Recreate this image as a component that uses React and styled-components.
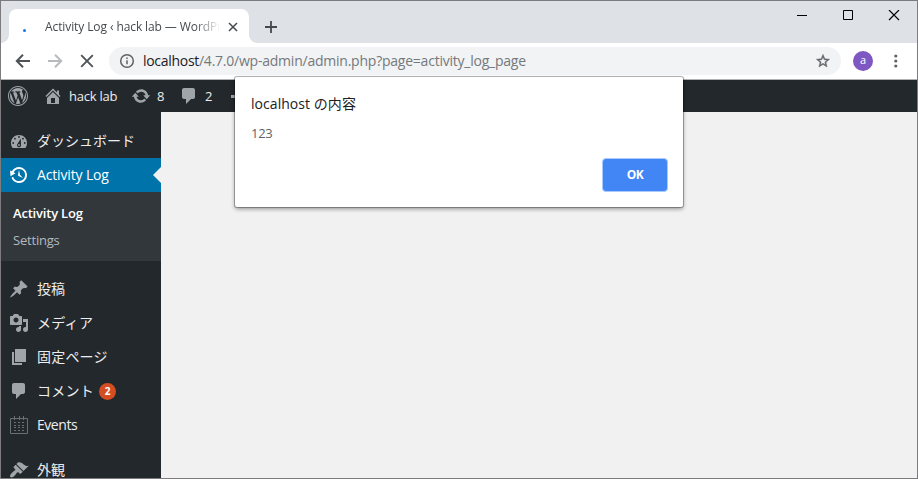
import React from "react";
import styled, { createGlobalStyle } from "styled-components";

const GlobalStyle = createGlobalStyle`
  * { box-sizing: border-box; }
  body { margin: 0; overflow: hidden; font-family: "Open Sans", "Noto Sans CJK JP", sans-serif; }
`;

const Window = styled.div`
  position: relative;
  width: 918px;
  height: 479px;
  overflow: hidden;
  display: flex;
  flex-direction: column;
  border: 1px solid #7c7c7e;
  background: #f1f1f1;
`;

const Label = styled.span`
  white-space: nowrap;
  line-height: 20px;
  font-size: ${(p) => p.$size || 13}px;
  font-weight: ${(p) => p.$weight || 400};
  color: ${(p) => p.$color || "inherit"};
  letter-spacing: ${(p) => p.$track || 0}px;
`;

const TabStrip = styled.header`
  display: flex;
  flex: none;
  height: 42px;
  padding: 8px 0 0 8px;
  background: #dee1e6;
`;

const Tab = styled.div`
  position: relative;
  display: flex;
  align-items: center;
  width: 240px;
  height: 34px;
  padding: 2px 11px 0 14px;
  border-radius: 8px 8px 0 0;
  background: #fff;
  color: #45494d;
  &::before, &::after {
    content: "";
    position: absolute;
    bottom: 0;
    width: 8px;
    height: 8px;
  }
  &::before { left: -8px; background: radial-gradient(circle at 0 0, transparent 7.5px, #fff 8px); }
  &::after { right: -8px; background: radial-gradient(circle at 100% 0, transparent 7.5px, #fff 8px); }
`;

const LoadingDot = styled.i`
  width: 3px;
  height: 3px;
  margin: 6px 19px 0 0;
  border-radius: 50%;
  background: #1a73e8;
`;

const TabTitle = styled.div`
  width: 175px;
  margin-right: 8px;
  display: flex;
  -webkit-mask-image: linear-gradient(to right, #000 150px, transparent 175px);
  mask-image: linear-gradient(to right, #000 150px, transparent 175px);
`;

const NewTab = styled.div`
  padding: 11px 0 0 15px;
  flex: 1;
`;

const WindowControls = styled.div`
  display: flex;
  gap: 34px;
  padding: 1px 17px 0 0;
`;

const Glyph = styled.svg`
  display: block;
  flex: none;
  width: ${(p) => p.$size}px;
  height: ${(p) => p.$size}px;
  fill: ${(p) => p.$fill || "none"};
  stroke: ${(p) => p.$stroke || "none"};
`;

const Toolbar = styled.nav`
  display: flex;
  flex: none;
  align-items: center;
  height: 37px;
  padding: 0 14px 1px 14px;
  border-bottom: 1px solid #b1b2b3;
  background: #fff;
`;

const NavButtons = styled.div`
  display: flex;
  flex: none;
  gap: 16px;
  width: 94px;
`;

const AddressBar = styled.div`
  display: flex;
  flex: none;
  align-items: center;
  width: 732px;
  height: 28px;
  padding: 0 10px;
  border-radius: 14px;
  background: #f1f3f4;
`;

const Url = styled.div`
  flex: 1;
  display: flex;
  margin-left: 8px;
`;

const Avatar = styled.div`
  display: flex;
  flex: none;
  align-items: center;
  justify-content: center;
  width: 20px;
  height: 20px;
  margin: 0 16px 0 12px;
  padding-bottom: 1px;
  border-radius: 50%;
  background: #7e57c2;
`;

const AdminBar = styled.div`
  display: flex;
  align-items: center;
  flex: none;
  height: 32px;
  padding-left: 7px;
  background: #23282d;
  color: #eee;
`;

const AdminItem = styled.div`
  display: flex;
  align-items: center;
  width: ${(p) => p.$width}px;
  gap: ${(p) => p.$gap || 6}px;
`;

const Body = styled.div`
  display: flex;
  flex: 1;
  min-height: 0;
`;

const Sidebar = styled.aside`
  width: 160px;
  padding-top: 12px;
  overflow: hidden;
  background: #23282d;
  color: #eee;
`;

const MenuItem = styled.div`
  position: relative;
  display: flex;
  align-items: center;
  gap: 8px;
  height: 34px;
  padding-left: 8px;
  margin-top: ${(p) => (p.$separated ? 11 : 0)}px;
  background: ${(p) => (p.$active ? "#0073aa" : "transparent")};
  color: ${(p) => (p.$active ? "#fff" : "#eee")};
`;

const Pointer = styled.i`
  position: absolute;
  right: 0;
  top: 9px;
  border: 8px solid transparent;
  border-left: 0;
  border-right-color: #f1f1f1;
`;

const SubMenu = styled.div`
  display: flex;
  flex-direction: column;
  gap: 7px;
  height: 69px;
  padding: 11px 12px;
  background: #32373c;
`;

const Count = styled.span`
  display: flex;
  align-items: center;
  justify-content: center;
  width: 17px;
  height: 17px;
  margin-left: -3px;
  border-radius: 50%;
  background: #d54e21;
  color: #fff;
`;

const Dialog = styled.div`
  position: absolute;
  left: 234px;
  top: 76px;
  display: flex;
  flex-direction: column;
  width: 448px;
  height: 130px;
  padding: 17px 15px 15px 16px;
  border-radius: 2px;
  background: #fff;
  box-shadow: 0 0 0 1px rgba(0, 0, 0, 0.27), 0 2px 4px rgba(0, 0, 0, 0.4);
`;

const DialogText = styled.div`
  display: flex;
  flex-direction: column;
  flex: 1;
  gap: 9px;
`;

const OkButton = styled.button`
  align-self: flex-end;
  display: flex;
  align-items: center;
  justify-content: center;
  width: 66px;
  height: 34px;
  padding: 0;
  border: 1px solid #a9c8fb;
  border-radius: 4px;
  background: #4285f4;
  font-family: inherit;
`;

const WORDPRESS = "M20 10c0-5.52-4.48-10-10-10S0 4.48 0 10s4.48 10 10 10 10-4.48 10-10zM10 1.01c4.97 0 8.99 4.02 8.99 8.99s-4.02 8.99-8.99 8.99S1.01 14.97 1.01 10 5.03 1.01 10 1.01zM8.01 14.82L4.96 6.61c.49-.03 1.05-.08 1.05-.08.43-.05.38-1.01-.06-.99 0 0-1.29.1-2.13.1-.15 0-.33 0-.52-.01 1.44-2.17 3.9-3.6 6.7-3.6 2.09 0 3.99.79 5.41 2.09-.6-.08-1.45.35-1.45 1.42 0 .66.38 1.22.79 1.88.31.54.5 1.22.5 2.21 0 1.34-1.27 4.48-1.27 4.48l-2.71-7.5c.48-.03.75-.16.75-.16.43-.05.38-1.1-.05-1.08 0 0-1.3.11-2.14.11-.78 0-2.11-.11-2.11-.11-.43-.02-.48 1.06-.05 1.08l.84.08 1.12 3.04zm6.02 2.15L16.64 10s.67-1.69.39-3.81c.63 1.14.94 2.42.94 3.81 0 2.96-1.56 5.58-3.94 6.97zM2.68 6.77L6.5 17.25c-2.67-1.3-4.47-4.08-4.47-7.25 0-1.16.2-2.23.65-3.23zm7.45 4.53l2.29 6.25c-.75.27-1.57.42-2.42.42-.72 0-1.41-.11-2.06-.3z";
const HOME = "M16 8.5l1.53 1.53-1.06 1.06L10 4.6l-6.47 6.49-1.06-1.06L10 2.5l4 4v-2h2v4zm-6-2.46l6 5.99V18H4v-5.97zM12 17v-5H8v5h4z";
const UPDATE = "M10.2 3.28c3.53 0 6.43 2.61 6.92 6h2.08l-3.5 4-3.5-4h2.32c-.45-1.97-2.21-3.45-4.32-3.45-1.45 0-2.73.71-3.54 1.78L4.95 5.66C6.23 4.2 8.11 3.28 10.2 3.28zm-.4 13.44c-3.52 0-6.43-2.61-6.92-6H.8l3.5-4c1.17 1.33 2.33 2.67 3.5 4H5.48c.45 1.97 2.21 3.45 4.32 3.45 1.45 0 2.73-.71 3.54-1.78l1.71 1.95c-1.28 1.46-3.15 2.38-5.25 2.38z";
const COMMENT = "M5 2h9c1.1 0 2 .9 2 2v7c0 1.1-.9 2-2 2h-2l-5 5v-5H5c-1.1 0-2-.9-2-2V4c0-1.1.9-2 2-2z";
const BACKUP = "M13.65 2.88c3.93 2.01 5.48 6.84 3.47 10.77s-6.83 5.48-10.77 3.47c-1.87-.96-3.2-2.56-3.86-4.4l1.64-1.03c.45 1.57 1.52 2.95 3.08 3.76 3.01 1.54 6.69.35 8.23-2.66 1.55-3.01.36-6.69-2.65-8.24C9.78 3.01 6.1 4.2 4.56 7.21l1.88.97-4.95 3.08-.39-5.82 1.78.91C4.9 2.4 9.75.89 13.65 2.88zm-4.36 7.83C9.11 10.53 9 10.28 9 10c0-.07.03-.12.04-.19h-.01L10 5l.97 4.81L14 13l-4.5-2.12.02-.02c-.08-.04-.16-.09-.23-.15z";
const PIN = "M10.44 3.02l1.82-1.82 6.36 6.35-1.83 1.82c-1.05-.68-2.48-.57-3.41.36l-.75.75c-.92.93-1.04 2.35-.35 3.41l-1.83 1.82-2.41-2.41-2.8 2.79c-.42.42-3.38 2.71-3.8 2.29s1.86-3.39 2.28-3.81l2.79-2.79L4.1 9.36l1.83-1.82c1.05.69 2.48.57 3.4-.36l.75-.75c.93-.92 1.05-2.35.36-3.41z";
const MEDIA = "M13 11V4c0-.55-.45-1-1-1h-1.67L9 1H5L3.67 3H2c-.55 0-1 .45-1 1v7c0 .55.45 1 1 1h10c.55 0 1-.45 1-1zM7 4.5c1.38 0 2.5 1.12 2.5 2.5S8.38 9.5 7 9.5 4.5 8.38 4.5 7 5.62 4.5 7 4.5zM14 6h5v10.5c0 1.38-1.12 2.5-2.5 2.5S14 17.88 14 16.5s1.12-2.5 2.5-2.5c.17 0 .34.02.5.05V9h-3V6zm-4 8.05V13h2v3.5c0 1.38-1.12 2.5-2.5 2.5S7 17.88 7 16.5 8.12 14 9.5 14c.17 0 .34.02.5.05z";
const PAGE = "M6 15V2h11v13H6zm-1 1h8v2H3V5h2v11z";
const BRUSH = "M14.48 11.06L7.41 3.99l1.5-1.5c.5-.56 2.3-.47 3.51.32 1.21.8 1.43 1.28 2.91 2.1 1.18.64 2.45 1.26 4.45.85zm-.71.71L6.7 4.7 4.93 6.47c-.39.39-.39 1.02 0 1.41l1.06 1.06c.39.39.39 1.03 0 1.42-.6.6-1.43 1.11-2.21 1.69-.35.26-.7.53-1.01.84C1.43 14.23.4 16.08 1.4 17.07c.99 1 2.84-.03 4.18-1.36.31-.31.58-.66.85-1.02.57-.78 1.08-1.61 1.69-2.21.39-.39 1.02-.39 1.41 0l1.06 1.06c.39.39 1.02.39 1.41 0z";

function AdminIcon({ path, color = "#a0a5aa" }) {
  return (
    <Glyph viewBox="0 0 20 20" $size={20} $fill={color}>
      <path d={path} />
    </Glyph>
  );
}

function DashboardIcon() {
  return (
    <Glyph viewBox="0 0 20 20" $size={20} $fill="#a0a5aa">
      <path d="M3.76 17h12.48c1.1-1.41 1.76-3.18 1.76-5.1C18 7.53 14.42 4 10 4s-8 3.53-8 7.9c0 1.92.66 3.69 1.76 5.1z" />
      <g fill="#23282d">
        <circle cx="10" cy="6" r="0.9" />
        <circle cx="6" cy="7.7" r="0.9" />
        <circle cx="14" cy="7.7" r="0.9" />
        <circle cx="4.2" cy="12" r="0.9" />
        <circle cx="15.8" cy="12" r="0.9" />
        <path d="M11.8 7.5 L12 14.2 A2 2 0 1 1 8.6 12.8z" />
      </g>
      <circle cx="10" cy="14" r="0.9" />
    </Glyph>
  );
}

function CalendarIcon() {
  return (
    <Glyph viewBox="0 0 20 20" $size={20} $stroke="#6a6f74">
      <path d="M1.5 3.5h17v15h-17zM5.5 1v4M10.5 1v4M14.5 1v4" />
      <path d="M5 7.5h10M5 10.5h10M5 12.5h10M5 15.5h10" strokeDasharray="2 2" />
    </Glyph>
  );
}

const menu = [
  { label: "投稿", icon: <AdminIcon path={PIN} />, separated: true },
  { label: "メディア", icon: <AdminIcon path={MEDIA} />, track: 0.3 },
  { label: "固定ページ", icon: <AdminIcon path={PAGE} />, track: 0.2 },
  { label: "コメント", icon: <AdminIcon path={COMMENT} />, track: 0.25, count: 2 },
  { label: "Events", icon: <CalendarIcon />, track: -0.45 },
  { label: "外観", icon: <AdminIcon path={BRUSH} />, separated: true },
];

export default function App() {
  return (
    <>
      <GlobalStyle />
      <Window>
        <TabStrip>
          <Tab>
            <LoadingDot />
            <TabTitle><Label $size={12} $track={-0.1}>Activity Log ‹ hack lab — WordPr</Label></TabTitle>
            <Glyph viewBox="0 0 10 10" $size={10} $stroke="#45494d" strokeWidth="1.5"><path d="M1 1l8 8M9 1l-8 8" /></Glyph>
          </Tab>
          <NewTab>
            <Glyph viewBox="0 0 14 14" $size={14} $stroke="#45494d" strokeWidth="1.8"><path d="M7 1v12M1 7h12" /></Glyph>
          </NewTab>
          <WindowControls>
            <Glyph viewBox="0 0 12 12" $size={12} $stroke="#000"><path d="M1 5.5h10" /></Glyph>
            <Glyph viewBox="0 0 12 12" $size={12} $stroke="#000"><path d="M1.5 .5h9v9h-9z" /></Glyph>
            <Glyph viewBox="0 0 12 12" $size={12} $stroke="#000" strokeWidth="1.2"><path d="M1 0l10 10M11 0L1 10" /></Glyph>
          </WindowControls>
        </TabStrip>

        <Toolbar>
          <NavButtons>
            <Glyph viewBox="0 0 16 16" $size={16} $stroke="#4f5357" strokeWidth="2"><path d="M15 8H2.2M8 1.8L1.8 8l6.2 6.2" /></Glyph>
            <Glyph viewBox="0 0 16 16" $size={16} $stroke="#b8babc" strokeWidth="2"><path d="M1 8h12.8M8 1.8L14.2 8 8 14.2" /></Glyph>
            <Glyph viewBox="0 0 16 16" $size={16} $stroke="#4f5357" strokeWidth="1.9"><path d="M2.2 2.2l11.6 11.6M13.8 2.2L2.2 13.8" /></Glyph>
          </NavButtons>
          <AddressBar>
            <Glyph viewBox="0 0 16 16" $size={16} $stroke="#5f6368" strokeWidth="1.5"><circle cx="8" cy="8" r="6.3" /><path d="M8 7.2v4M8 4.5v1.6" /></Glyph>
            <Url>
              <Label $size={14} $color="#202124" $track={-0.3}>localhost</Label>
              <Label $size={14} $color="#75797d" $track={-0.23}>/4.7.0/wp-admin/admin.php?page=activity_log_page</Label>
            </Url>
            <Glyph viewBox="0 0 24 24" $size={16} $fill="#5f6368"><path d="M22 9.24l-7.19-.62L12 2 9.19 8.63 2 9.24l5.46 4.73L5.82 21 12 17.27 18.18 21l-1.63-7.03L22 9.24zM12 15.4l-3.76 2.27 1-4.28-3.32-2.88 4.38-.38L12 6.1l1.71 4.04 4.38.38-3.32 2.88 1 4.28L12 15.4z" stroke="#5f6368" strokeWidth=".6" /></Glyph>
          </AddressBar>
          <Avatar><Label $size={11} $color="#fff">a</Label></Avatar>
          <Glyph viewBox="0 0 14 14" $size={14} $fill="#5f6368"><circle cx="6.8" cy="2" r="1.6" /><circle cx="6.8" cy="7" r="1.6" /><circle cx="6.8" cy="12" r="1.6" /></Glyph>
        </Toolbar>

        <AdminBar>
          <AdminItem $width={35}><AdminIcon path={WORDPRESS} /></AdminItem>
          <AdminItem $width={88}><AdminIcon path={HOME} /><Label $track={-0.25}>hack lab</Label></AdminItem>
          <AdminItem $width={48}><AdminIcon path={UPDATE} /><Label>8</Label></AdminItem>
          <AdminItem $width={49}><AdminIcon path={COMMENT} /><Label>2</Label></AdminItem>
          <AdminItem $width={20}>
            <Glyph viewBox="0 0 20 20" $size={20} $stroke="#a0a5aa" strokeWidth="3"><path d="M3 10.5h14M10 3v14" /></Glyph>
          </AdminItem>
        </AdminBar>

        <Body>
          <Sidebar>
            <MenuItem><DashboardIcon /><Label $size={14}>ダッシュボード</Label></MenuItem>
            <MenuItem $active><AdminIcon path={BACKUP} color="#fff" /><Label $size={14} $track={-0.15}>Activity Log</Label><Pointer /></MenuItem>
            <SubMenu>
              <Label $weight={600} $color="#fff" $track={-0.2}>Activity Log</Label>
              <Label $color="#b4b9be" $track={-0.2}>Settings</Label>
            </SubMenu>
            {menu.map((item) => (
              <MenuItem key={item.label} $separated={item.separated}>
                {item.icon}
                <Label $size={14} $track={item.track}>{item.label}</Label>
                {item.count && <Count><Label $size={10} $weight={700}>{item.count}</Label></Count>}
              </MenuItem>
            ))}
          </Sidebar>
        </Body>

        <Dialog>
          <DialogText>
            <Label $size={14} $color="#202124" $track={0.05}>localhost の内容</Label>
            <Label $color="#5f6368" $track={-0.3}>123</Label>
          </DialogText>
          <OkButton><Label $size={12} $weight={700} $color="#fff" $track={-0.4}>OK</Label></OkButton>
        </Dialog>
      </Window>
    </>
  );
}
